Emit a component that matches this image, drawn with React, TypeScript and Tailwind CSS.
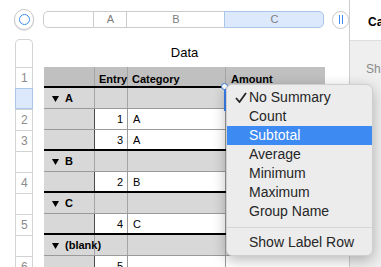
type Row =
  | { kind: 'header' }
  | { kind: 'group'; label: string }
  | { kind: 'data'; entry: string; cat: string; thick?: boolean };

const rows: Row[] = [
  { kind: 'header' },
  { kind: 'group', label: 'A' },
  { kind: 'data', entry: '1', cat: 'A' },
  { kind: 'data', entry: '3', cat: 'A', thick: true },
  { kind: 'group', label: 'B' },
  { kind: 'data', entry: '2', cat: 'B', thick: true },
  { kind: 'group', label: 'C' },
  { kind: 'data', entry: '4', cat: 'C', thick: true },
  { kind: 'group', label: '(blank)' },
  { kind: 'data', entry: '5', cat: '' },
];

const rowLabels = ['1', '', '2', '3', '', '4', '', '5', '', '6'];

const menuItems = ['No Summary', 'Count', 'Subtotal', 'Average', 'Minimum', 'Maximum', 'Group Name'];

function Triangle() {
  return (
    <svg width="7" height="6" viewBox="0 0 7 6" className="mr-[6px] shrink-0">
      <path d="M0 0 H7 L3.5 6 Z" fill="#000" />
    </svg>
  );
}

function TableRow({ row }: { row: Row }) {
  if (row.kind === 'header') {
    return (
      <div className="flex h-[21px] border-b-2 border-black bg-[#c0c0c0] font-bold leading-[13px]">
        <div className="w-[51px] border-r border-[#a5a5a5]" />
        <div className="w-[33px] border-r border-[#a5a5a5] pl-[4px] pt-[6px]">Entry</div>
        <div className="w-[98px] border-r border-[#a5a5a5] pl-[4px] pt-[6px]">Category</div>
        <div className="w-[99px] pl-[5px] pt-[6px]">Amount</div>
      </div>
    );
  }
  if (row.kind === 'group') {
    return (
      <div className="flex h-[21px] border-b border-[#9a9a9a] bg-[#d8d8d8] font-bold">
        <div className="flex w-[51px] items-center border-r border-[#a5a5a5] pl-[8px] pt-[1px]">
          <Triangle />
          <span>{row.label}</span>
        </div>
        <div className="w-[33px] border-r border-[#a5a5a5]" />
        <div className="w-[98px] border-r border-[#a5a5a5]" />
        <div className="w-[99px]" />
      </div>
    );
  }
  return (
    <div className={`flex h-[21px] ${row.thick ? 'border-b-2 border-black' : 'border-b border-[#9a9a9a]'}`}>
      <div className="w-[51px] border-r border-[#4a4a4a] bg-[#d8d8d8]" />
      <div className="flex w-[33px] items-center justify-end border-r border-[#9a9a9a] bg-white pr-[4px] pt-[1px]">
        {row.entry}
      </div>
      <div className="flex w-[98px] items-center border-r border-[#9a9a9a] bg-white pl-[5px] pt-[1px]">{row.cat}</div>
      <div className="w-[99px] bg-white" />
    </div>
  );
}

export default function App() {
  return (
    <div className="relative flex h-[267px] w-[381px] overflow-hidden bg-white font-['Liberation_Sans',Arial,sans-serif] text-[11px] text-black">
      {/* main sheet area */}
      <div className="w-[349px] shrink-0 overflow-hidden">
        <div className="flex h-[39px] items-center pl-[14px]">
          <div className="flex h-[21px] w-[21px] items-center justify-center rounded-full border border-[#c8c8c8] bg-white shadow-[0_1px_1px_rgba(0,0,0,0.12)]">
            <div className="h-[11px] w-[11px] rounded-full border-[1.5px] border-[#3a8ef2]" />
          </div>
          <div className="ml-[9px] flex h-[17px] text-[11px] text-[#7d7d7d]">
            <div className="w-[51px] rounded-l-[5px] border border-[#cbcbcb] bg-white" />
            <div className="flex w-[33px] items-center justify-center border-y border-r border-[#cbcbcb] bg-white">A</div>
            <div className="flex w-[98px] items-center justify-center border-y border-r border-[#cbcbcb] bg-white">B</div>
            <div className="-ml-px flex w-[100px] items-center justify-center rounded-r-[5px] border border-[#a9c5ea] bg-[#dce8fb]">C</div>
          </div>
          <div className="ml-[8px] flex h-[18px] w-[17px] items-center justify-center gap-[2px] rounded-full border border-[#c8c8c8] bg-white">
            <div className="h-[9px] w-px bg-[#3a8ef2]" />
            <div className="h-[9px] w-px bg-[#3a8ef2]" />
          </div>
        </div>

        <div className="flex pl-[15px]">
          {/* row headers */}
          <div className="w-[18px] shrink-0 text-[12px] text-[#8c8c8c]">
            <div className="h-[28px] rounded-t-[5px] border border-b-0 border-[#d3d3d3]" />
            {rowLabels.map((label, i) => (
              <div
                key={i}
                className={`h-[21px] border-t pl-[5px] leading-[20px] ${
                  i === 1 ? 'border border-[#abc7ec] bg-[#dce8fb]' : 'border-x border-[#d3d3d3]'
                }`}
              >
                {label}
              </div>
            ))}
          </div>

          {/* sheet */}
          <div className="ml-[11px] w-[281px] shrink-0">
            <div className="flex h-[28px] items-center justify-center text-[13px]">Data</div>
            {rows.map((row, i) => (
              <TableRow key={i} row={row} />
            ))}
          </div>
        </div>
      </div>

      {/* inspector edge */}
      <div className="flex-1 border-l border-[#cdcdcd]">
        <div className="h-[40px] pl-[18px] pt-[13px] text-[12px] font-bold">Ca</div>
        <div className="h-full border-t border-[#dedede] bg-[#efefef] pl-[16px] pt-[19px] text-[12px] text-[#8a8a8a]">Sh</div>
      </div>

      {/* selected cell edge */}
      <div className="absolute left-[224px] top-[86px] h-[25px] w-[2px] bg-[#3b82f0]" />
      <div className="absolute left-[221px] top-[83px] h-[7px] w-[7px] rounded-full border border-[#3b7ee0] bg-white" />

      {/* summary menu */}
      <div className="absolute left-[226px] top-[84px] w-[147px] rounded-[6px] border border-[#cfcfcf] bg-[#ececec] py-[3px] text-[14px] text-[#262626] shadow-[0_4px_14px_rgba(0,0,0,0.28)]">
        {menuItems.map((item, i) => (
          <div
            key={item}
            className={`flex h-[19px] items-center ${i === 2 ? 'bg-[#3d8af3] text-white' : ''}`}
          >
            <div className="flex w-[21px] justify-end pr-[1px]">
              {i === 0 && (
                <svg width="12" height="11" viewBox="0 0 12 11">
                  <path d="M1 6 L4.5 10 L11 1" fill="none" stroke="#262626" strokeWidth="1.8" />
                </svg>
              )}
            </div>
            <span className="pl-[1px]">{item}</span>
          </div>
        ))}
        <div className="flex h-[12px] items-center">
          <div className="h-px w-full bg-[#d6d6d6]" />
        </div>
        <div className="flex h-[19px] items-center pl-[22px]">Show Label Row</div>
      </div>
    </div>
  );
}
